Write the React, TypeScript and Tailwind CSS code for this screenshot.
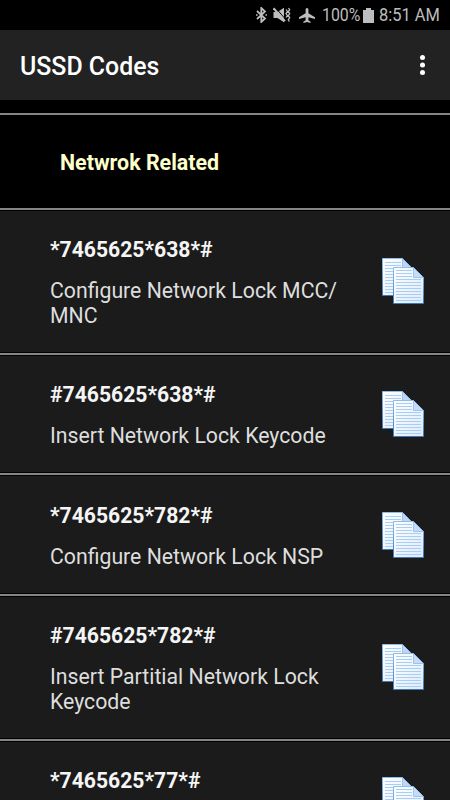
type UssdCode = {
  code: string;
  description?: string;
  height: string;
};

const codes: UssdCode[] = [
  { code: "*7465625*638*#", description: "Configure Network Lock MCC/\nMNC", height: "h-[145px] pt-[26px]" },
  { code: "#7465625*638*#", description: "Insert Network Lock Keycode", height: "h-[120px] pt-[26px]" },
  { code: "*7465625*782*#", description: "Configure Network Lock NSP", height: "h-[121px] pt-[27px]" },
  { code: "#7465625*782*#", description: "Insert Partitial Network Lock\nKeycode", height: "h-[145px] pt-[26px]" },
  { code: "*7465625*77*#", height: "h-[120px] pt-[26px]" },
];

function StatusBar() {
  return (
    <div className="flex h-[30px] shrink-0 items-center justify-end bg-black pr-[11px] text-[#bdbdbd]">
      {/* Bluetooth */}
      <svg viewBox="0 0 11 16" className="mr-[6px] h-4 w-[11px]" fill="none" stroke="currentColor" strokeWidth="1.8">
        <path d="M1 4l8 7.5L5.3 15V1L9 4.5 1 12" />
        <path d="M0 8h1.6M9.4 8H11" strokeWidth="1.6" />
      </svg>
      {/* Vibrate / muted */}
      <svg viewBox="0 0 18 16" className="mr-[8px] h-4 w-[18px]" fill="currentColor">
        <path d="M0.5 5h4L11 0.8v14.4L4.5 11h-4z" />
        <path d="M2 0.2l11 12.6" stroke="#000" strokeWidth="1" />
        <path d="M0.5 1.2l11.5 13" stroke="currentColor" strokeWidth="2" />
        <path
          d="M13.2 2.5l1.2 2-1.4 2 1.4 2-1.4 2M15.5 1l1.2 1.7-1.4 2 1.4 2-1.4 2 1.4 2-1.4 2 1 1.8"
          fill="none"
          stroke="currentColor"
          strokeWidth="1.3"
        />
      </svg>
      {/* Airplane mode */}
      <svg viewBox="0 0 16 15" className="mr-[7px] h-[15px] w-4" fill="currentColor">
        <path d="M8 0c.9 0 1.4.8 1.4 1.6v3.6L16 9.2v1.9L9.4 9.3v3l2.2 1.4V15L8 14.1 4.4 15v-1.3l2.2-1.4v-3L0 11.1V9.2l6.6-4V1.6C6.6.8 7.1 0 8 0z" />
      </svg>
      <span className="w-[38px] origin-left scale-x-[0.85] whitespace-nowrap text-[18.7px] leading-[32px]">100%</span>
      <svg viewBox="0 0 11 15" className="ml-[3px] mr-[5px] h-[15px] w-[11px]" fill="currentColor">
        <path d="M3 0h5v2h3v13H0V2h3z" />
      </svg>
      <span className="w-[60px] origin-left scale-x-[0.88] whitespace-nowrap text-[18.7px] leading-[32px]">8:51 AM</span>
    </div>
  );
}

function CopyIcon() {
  return (
    <svg viewBox="0 0 44 48" className="h-12 w-11 shrink-0">
      <defs>
        <linearGradient id="page" x1="0" y1="0" x2="1" y2="1">
          <stop offset="0" stopColor="#ffffff" />
          <stop offset="1" stopColor="#dceafb" />
        </linearGradient>
        <linearGradient id="edge" x1="0" y1="0" x2="0" y2="1">
          <stop offset="0" stopColor="#8dbdec" />
          <stop offset="1" stopColor="#4077b5" />
        </linearGradient>
      </defs>
      <path d="M1.5 1.5h20l9 9v28h-29z" fill="url(#page)" stroke="url(#edge)" />
      <path d="M4 5.5h16M4 8.5h16M4 11.5h8M4 14.5h8M4 17.5h8M4 20.5h8M4 23.5h8M4 26.5h8M4 29.5h8M4 32.5h8M4 35.5h8" stroke="#a9cdf3" />
      <path d="M21.5 1.5v9h9z" fill="#bcd6f5" stroke="#82b3e7" strokeWidth="0.7" />
      <path d="M12.5 10.5h20l10 10v26h-30z" fill="url(#page)" stroke="url(#edge)" />
      <path d="M15 13.5h16M15 16.5h16M15 19.5h16M15 22.5h25M15 25.5h25M15 28.5h25M15 31.5h25M15 34.5h25M15 37.5h25M15 40.5h25M15 43.5h25" stroke="#a9cdf3" />
      <path d="M32.5 10.5v10h10z" fill="#c5dcf7" stroke="#82b3e7" strokeWidth="0.7" />
    </svg>
  );
}

function CodeRow({ item }: { item: UssdCode }) {
  return (
    <div className={`${item.height} flex shrink-0 justify-between border-b-2 border-[#858585] bg-[#1b1b1b] pl-[50px] pr-[25px] shadow-[inset_0_1px_0_#000,inset_0_-1px_0_#000]`}>
      <div className="pt-px">
        <h3 className="text-[21.15px] font-bold leading-[25px] text-[#f5f5f5]">{item.code}</h3>
        {item.description && (
          <p className="mt-4 whitespace-pre text-[21.25px] leading-[25px] text-[#dedede]">{item.description}</p>
        )}
      </div>
      <div className="-mt-[27px] flex items-center">
        <CopyIcon />
      </div>
    </div>
  );
}

export default function App() {
  return (
    <div className="flex h-[800px] w-[450px] flex-col overflow-hidden bg-black font-['Roboto',sans-serif]">
      <StatusBar />
      <header className="flex h-[70px] shrink-0 items-center justify-between bg-[#222222] pl-5 pr-[25px] text-white">
        <h1 className="pt-[3px] text-[24.9px] font-medium">USSD Codes</h1>
        <svg viewBox="0 0 5 20" className="h-5 w-[5px]" fill="currentColor">
          <circle cx="2.5" cy="2.5" r="2.5" />
          <circle cx="2.5" cy="10" r="2.5" />
          <circle cx="2.5" cy="17.5" r="2.5" />
        </svg>
      </header>
      <div className="mt-[13px] flex h-[97px] shrink-0 items-center border-y-2 border-[#858585] pl-[60px] pt-[3px]">
        <h2 className="text-[21.4px] font-bold text-[#ffffcc]">Netwrok Related</h2>
      </div>
      {codes.map((item) => (
        <CodeRow key={item.code} item={item} />
      ))}
    </div>
  );
}
